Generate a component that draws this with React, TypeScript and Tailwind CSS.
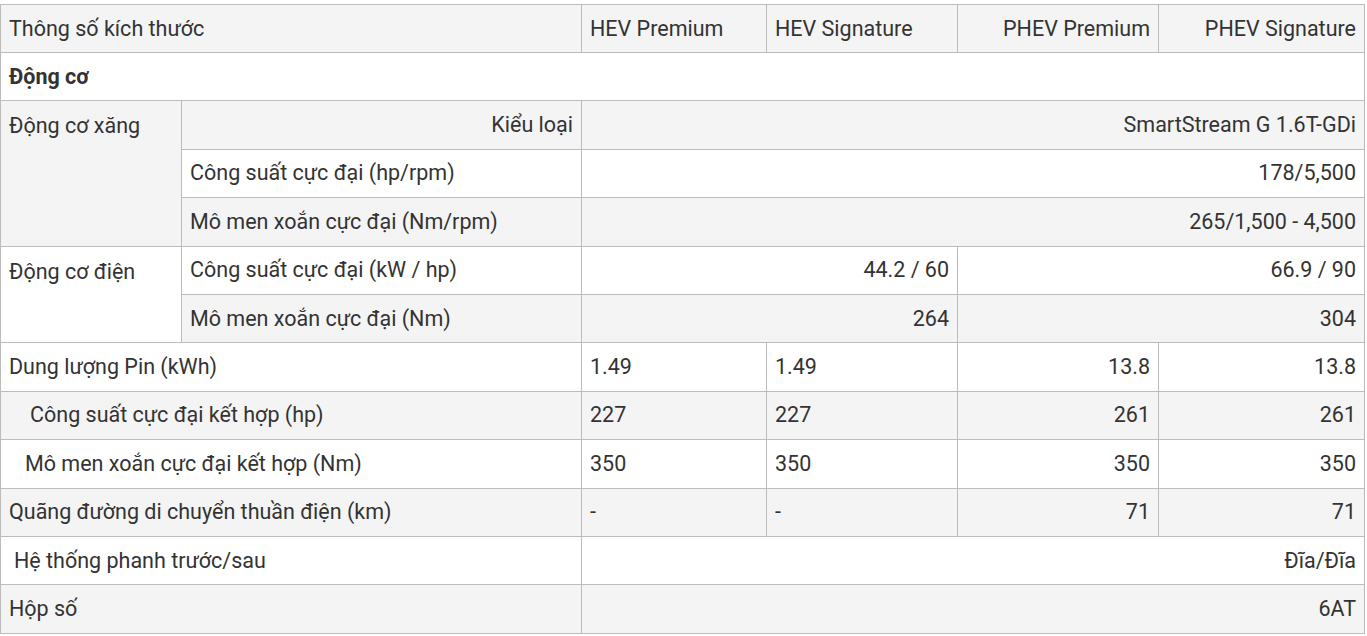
import React from "react";

const td = "border border-[#bcbcbc] px-2 align-middle whitespace-nowrap";
const L = td + " text-left";
const R = td + " text-right";

export default function App() {
  return (
    <div className="pt-1 bg-white min-h-[636px]" style={{ fontFamily: "Roboto, 'Noto Sans', sans-serif" }}>
      <table className="table-fixed border-collapse w-[1364px] text-[21.5px] leading-[26px] text-[#333333]">
        <colgroup>
          <col className="w-[181px]" />
          <col className="w-[400px]" />
          <col className="w-[185px]" />
          <col className="w-[191px]" />
          <col className="w-[201px]" />
          <col className="w-[206px]" />
        </colgroup>
        <tbody>
          <tr className="h-[48.4px] bg-[#f4f4f4]">
            <td className={L} colSpan={2}>Thông số kích thước</td>
            <td className={L}>HEV Premium</td>
            <td className={L}>HEV Signature</td>
            <td className={R}>PHEV Premium</td>
            <td className={R}>PHEV Signature</td>
          </tr>
          <tr className="h-[48px] bg-white">
            <td className={L + " font-bold"} colSpan={6}>Động cơ</td>
          </tr>
          <tr className="h-[48.4px] bg-[#f4f4f4]">
            <td className={L + " align-top pt-[12px]"} rowSpan={3}>Động cơ xăng</td>
            <td className={R}>Kiểu loại</td>
            <td className={R} colSpan={4}>SmartStream G 1.6T-GDi</td>
          </tr>
          <tr className="h-[48.4px] bg-white">
            <td className={L}>Công suất cực đại (hp/rpm)</td>
            <td className={R} colSpan={4}>178/5,500</td>
          </tr>
          <tr className="h-[48.4px] bg-[#f4f4f4]">
            <td className={L}>Mô men xoắn cực đại (Nm/rpm)</td>
            <td className={R} colSpan={4}>265/1,500 - 4,500</td>
          </tr>
          <tr className="h-[48.4px] bg-white">
            <td className={L + " align-top pt-[12px]"} rowSpan={2}>Động cơ điện</td>
            <td className={L}>Công suất cực đại (kW / hp)</td>
            <td className={R} colSpan={2}>44.2 / 60</td>
            <td className={R} colSpan={2}>66.9 / 90</td>
          </tr>
          <tr className="h-[48.4px] bg-[#f4f4f4]">
            <td className={L}>Mô men xoắn cực đại (Nm)</td>
            <td className={R} colSpan={2}>264</td>
            <td className={R} colSpan={2}>304</td>
          </tr>
          <tr className="h-[48.4px] bg-white">
            <td className={L} colSpan={2}>Dung lượng Pin (kWh)</td>
            <td className={L}>1.49</td>
            <td className={L}>1.49</td>
            <td className={R}>13.8</td>
            <td className={R}>13.8</td>
          </tr>
          <tr className="h-[48.4px] bg-[#f4f4f4]">
            <td className={L + " pl-[29px]"} colSpan={2}>Công suất cực đại kết hợp (hp)</td>
            <td className={L}>227</td>
            <td className={L}>227</td>
            <td className={R}>261</td>
            <td className={R}>261</td>
          </tr>
          <tr className="h-[48.4px] bg-white">
            <td className={L + " pl-[24px]"} colSpan={2}>Mô men xoắn cực đại kết hợp (Nm)</td>
            <td className={L}>350</td>
            <td className={L}>350</td>
            <td className={R}>350</td>
            <td className={R}>350</td>
          </tr>
          <tr className="h-[48.4px] bg-[#f4f4f4]">
            <td className={L} colSpan={2}>Quãng đường di chuyển thuần điện (km)</td>
            <td className={L}>-</td>
            <td className={L}>-</td>
            <td className={R}>71</td>
            <td className={R}>71</td>
          </tr>
          <tr className="h-[48.4px] bg-white">
            <td className={L + " pl-[13px]"} colSpan={2}>Hệ thống phanh trước/sau</td>
            <td className={R} colSpan={4}>Đĩa/Đĩa</td>
          </tr>
          <tr className="h-[48.4px] bg-[#f4f4f4]">
            <td className={L} colSpan={2}>Hộp số</td>
            <td className={R} colSpan={4}>6AT</td>
          </tr>
        </tbody>
      </table>
    </div>
  );
}
